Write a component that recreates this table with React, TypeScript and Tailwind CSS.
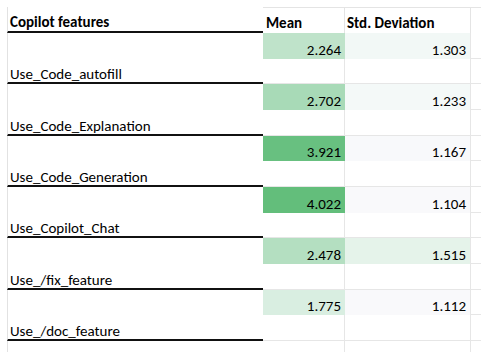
import React from "react";

type Row = {
  label: string;
  mean: string;
  meanBg: string;
  std: string;
  stdBg: string;
};

const rows: Row[] = [
  { label: "Use_Code_autofill", mean: "2.264", meanBg: "bg-[#bfe3ca]", std: "1.303", stdBg: "bg-[#f2f8f6]" },
  { label: "Use_Code_Explanation", mean: "2.702", meanBg: "bg-[#a8dab7]", std: "1.233", stdBg: "bg-[#f4f9f8]" },
  { label: "Use_Code_Generation", mean: "3.921", meanBg: "bg-[#68c080]", std: "1.167", stdBg: "bg-[#f8f9fb]" },
  { label: "Use_Copilot_Chat", mean: "4.022", meanBg: "bg-[#63be7b]", std: "1.104", stdBg: "bg-[#f9f9fb]" },
  { label: "Use_/fix_feature", mean: "2.478", meanBg: "bg-[#b4dfc1]", std: "1.515", stdBg: "bg-[#e5f3ea]" },
  { label: "Use_/doc_feature", mean: "1.775", meanBg: "bg-[#d9eee1]", std: "1.112", stdBg: "bg-[#f9f9fb]" },
];

export default function App() {
  return (
    <div
      className="w-[481px] h-[352px] bg-white overflow-hidden text-black text-[15px]"
      style={{ fontFamily: "Carlito, Lato, 'Liberation Sans', sans-serif" }}
    >
      <div className="pt-[7px] pl-[7px] flex flex-col">
        {/* header */}
        <div className="flex h-[26px]">
          <div className="w-[256px] border-l border-[#e2e2e2] border-b-2 border-b-[#111] flex items-end pl-[2px] pb-[1px] font-bold leading-[16px]">
            Copilot features
          </div>
          <div className="w-[82px] border-t border-r border-[#e4e4e4] flex items-end pl-[3px] pb-[2px] font-bold leading-[16px]">
            Mean
          </div>
          <div className="w-[126px] border-t border-r border-[#e4e4e4] flex items-end pl-[2px] pb-[2px] font-bold leading-[16px]">
            Std. Deviation
          </div>
          <div className="w-[10px] border-t border-[#e4e4e4]" />
        </div>
        {rows.map((r) => (
          <div key={r.label} className="flex h-[51.33px]">
            <div className="w-[256px] border-l border-[#e2e2e2] border-b-2 border-b-[#111] flex items-end pl-[2px] pb-0 leading-[16px]">
              {r.label}
            </div>
            <div className="w-[82px] flex flex-col">
              <div className={`h-[25.67px] ${r.meanBg} flex items-end justify-end pr-[4px] pb-[1px] leading-[16px]`}>
                {r.mean}
              </div>
              <div className="h-[25.67px] border-r border-b border-[#e6e6e6]" />
            </div>
            <div className="w-[126px] flex flex-col">
              <div className={`h-[25.67px] ${r.stdBg} border-r border-[#e6e6e6] flex items-end justify-end pr-[4px] pb-[1px] leading-[16px]`}>
                {r.std}
              </div>
              <div className="h-[25.67px] border-r border-b border-[#e6e6e6]" />
            </div>
            <div className="w-[10px] flex flex-col">
              <div className="h-[25.67px] border-b border-[#e6e6e6]" />
              <div className="h-[25.67px] border-b border-[#e6e6e6]" />
            </div>
          </div>
        ))}
        <div className="flex h-[20px]">
          <div className="w-[256px] border-l border-[#e2e2e2]" />
          <div className="w-[82px] border-r border-[#e6e6e6]" />
          <div className="w-[126px] border-r border-[#e6e6e6]" />
        </div>
      </div>
    </div>
  );
}
